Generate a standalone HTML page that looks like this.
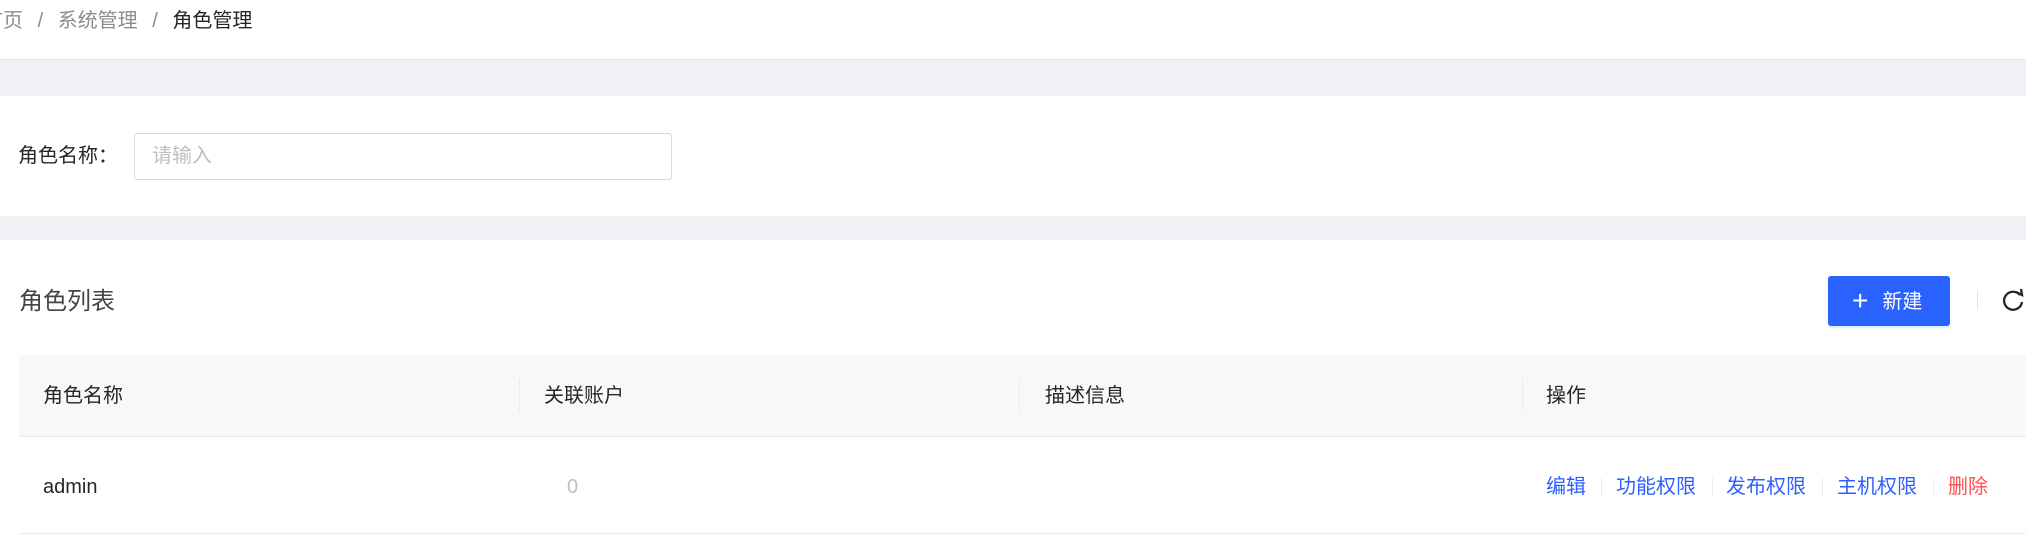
<!DOCTYPE html>
<html><head><meta charset="utf-8"><style>
*{margin:0;padding:0;box-sizing:border-box}
body{width:2026px;height:550px;overflow:hidden;background:#fff;font-family:"Liberation Sans","Noto Sans CJK SC",sans-serif;font-size:20px;color:#262626;position:relative}
.a{position:absolute;white-space:nowrap}
.gray{background:#f0f1f4}
</style></head><body>
<div class="a" style="left:-17px;top:6px;color:#8c8c8c;line-height:30px">首页 <span style="margin:0 9px">/</span> 系统管理 <span style="margin:0 9px">/</span> <span style="color:#262626">角色管理</span></div>
<div class="a gray" style="left:0;top:59px;width:2026px;height:37px;border-top:1px solid #e6e6e6"></div>
<div class="a" style="left:18px;top:141px;line-height:30px">角色名称：</div>
<div class="a" style="left:134px;top:133px;width:538px;height:47px;border:1px solid #d9d9d9;border-radius:3px;color:#bfbfbf;padding-left:17px;line-height:45px">请输入</div>
<div class="a gray" style="left:0;top:216px;width:2026px;height:24px"></div>
<div class="a" style="left:19px;top:286px;font-size:24px;line-height:32px;color:#444">角色列表</div>
<div class="a" style="left:1828px;top:276px;width:122px;height:50px;background:#2962ff;border-radius:3px;color:#fff;line-height:50px;padding-left:24px;box-shadow:0 2px 2px rgba(41,98,255,.15)"><span style="font-size:28px;font-weight:300;vertical-align:-2px;margin-right:14px">+</span>新建</div>
<div class="a" style="left:1977px;top:290px;width:1px;height:20px;background:#e5e5e5"></div>
<svg class="a" style="left:2000px;top:288px" width="26" height="26" viewBox="0 0 26 26"><path d="M20 7A9 9 0 1 0 22 14" fill="none" stroke="#262626" stroke-width="2.3"/><path d="M16 4L22 7L21 1" fill="none" stroke="#262626" stroke-width="2.3"/></svg>
<div class="a" style="left:19px;top:355px;width:2007px;height:82px;background:#f8f8f8;border-bottom:1px solid #eaeaea"></div>
<div class="a" style="left:43px;top:381px;line-height:30px">角色名称</div>
<div class="a" style="left:519px;top:379px;width:1px;height:33px;background:#ebebeb"></div>
<div class="a" style="left:544px;top:381px;line-height:30px">关联账户</div>
<div class="a" style="left:1019px;top:379px;width:1px;height:33px;background:#ebebeb"></div>
<div class="a" style="left:1045px;top:381px;line-height:30px">描述信息</div>
<div class="a" style="left:1522px;top:379px;width:1px;height:33px;background:#ebebeb"></div>
<div class="a" style="left:1546px;top:381px;line-height:30px">操作</div>
<div class="a" style="left:43px;top:472px;line-height:30px">admin</div>
<div class="a" style="left:567px;top:472px;line-height:30px;color:#bfbfbf">0</div>
<div class="a" style="left:1546px;top:472px;line-height:30px;color:#2f5fff">编辑</div>
<div class="a" style="left:1601px;top:478px;width:1px;height:18px;background:#ebebeb"></div>
<div class="a" style="left:1616px;top:472px;line-height:30px;color:#2f5fff">功能权限</div>
<div class="a" style="left:1712px;top:478px;width:1px;height:18px;background:#ebebeb"></div>
<div class="a" style="left:1726px;top:472px;line-height:30px;color:#2f5fff">发布权限</div>
<div class="a" style="left:1822px;top:478px;width:1px;height:18px;background:#ebebeb"></div>
<div class="a" style="left:1837px;top:472px;line-height:30px;color:#2f5fff">主机权限</div>
<div class="a" style="left:1933px;top:478px;width:1px;height:18px;background:#ebebeb"></div>
<div class="a" style="left:1948px;top:472px;line-height:30px;color:#ff4d4f">删除</div>
<div class="a" style="left:19px;top:533px;width:2007px;height:1px;background:#eaeaea"></div>
</body></html>
